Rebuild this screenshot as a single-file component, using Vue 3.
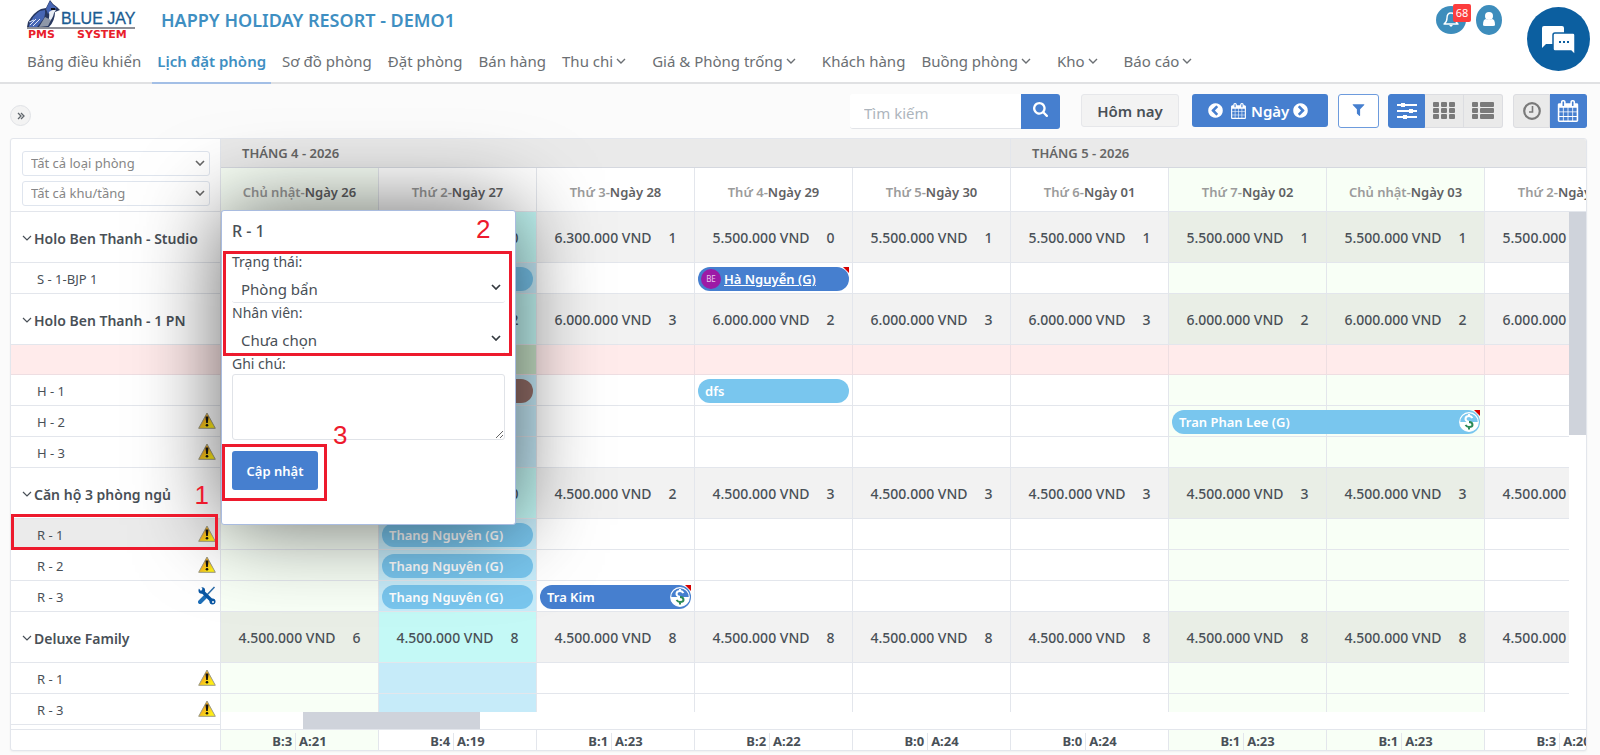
<script setup>
const nav = [
  { label: 'Bảng điều khiển' },
  { label: 'Lịch đặt phòng', active: true },
  { label: 'Sơ đồ phòng' },
  { label: 'Đặt phòng' },
  { label: 'Bán hàng' },
  { label: 'Thu chi', menu: true },
  { label: 'Giá & Phòng trống', menu: true },
  { label: 'Khách hàng' },
  { label: 'Buồng phòng', menu: true },
  { label: 'Kho', menu: true },
  { label: 'Báo cáo', menu: true }
]

const days = [
  { name: 'Chủ nhật', day: 'Ngày 26', b: 3, a: 21, kind: 'weekend' },
  { name: 'Thứ 2', day: 'Ngày 27', b: 4, a: 19, kind: 'today' },
  { name: 'Thứ 3', day: 'Ngày 28', b: 1, a: 23 },
  { name: 'Thứ 4', day: 'Ngày 29', b: 2, a: 22 },
  { name: 'Thứ 5', day: 'Ngày 30', b: 0, a: 24 },
  { name: 'Thứ 6', day: 'Ngày 01', b: 0, a: 24 },
  { name: 'Thứ 7', day: 'Ngày 02', b: 1, a: 23, kind: 'weekend' },
  { name: 'Chủ nhật', day: 'Ngày 03', b: 1, a: 23, kind: 'weekend' },
  { name: 'Thứ 2', day: 'Ngày 04', b: 3, a: 20 }
]

const fill = (price, counts) => counts.map((n) => ({ price, n }))

const rows = [
  {
    type: 'group',
    label: 'Holo Ben Thanh - Studio',
    cells: [...fill('6.300.000', [1, 0, 1]), ...fill('5.500.000', [0, 1, 1, 1, 1, 1])]
  },
  {
    type: 'room',
    label: 'S - 1-BJP 1',
    bookings: { 1: { text: '', tone: 'sky' }, 3: { text: 'Hà Nguyễn (G)', tone: 'blue', badge: 'BE', flag: true } }
  },
  { type: 'group', label: 'Holo Ben Thanh - 1 PN', cells: fill('6.000.000', [3, 2, 3, 2, 3, 3, 2, 2, 3]) },
  { type: 'blocked', label: '' },
  { type: 'room', label: 'H - 1', bookings: { 1: { text: '', tone: 'brown' }, 3: { text: 'dfs', tone: 'sky' } } },
  { type: 'room', label: 'H - 2', icon: 'warn', bookings: { 6: { text: 'Tran Phan Lee (G)', tone: 'sky', span: 2, flag: true, money: true } } },
  { type: 'room', label: 'H - 3', icon: 'warn' },
  { type: 'group', label: 'Căn hộ 3 phòng ngủ', cells: fill('4.500.000', [3, 0, 2, 3, 3, 3, 3, 3, 3]) },
  { type: 'room', label: 'R - 1', icon: 'warn', selected: true, bookings: { 1: { text: 'Thang Nguyên (G)', tone: 'sky' } } },
  { type: 'room', label: 'R - 2', icon: 'warn', bookings: { 1: { text: 'Thang Nguyên (G)', tone: 'sky' } } },
  {
    type: 'room',
    label: 'R - 3',
    icon: 'tools',
    bookings: { 1: { text: 'Thang Nguyên (G)', tone: 'sky' }, 2: { text: 'Tra Kim', tone: 'blue', flag: true, money: true } }
  },
  { type: 'group', label: 'Deluxe Family', cells: fill('4.500.000', [6, 8, 8, 8, 8, 8, 8, 8, 8]) },
  { type: 'room', label: 'R - 1', icon: 'warn' },
  { type: 'room', label: 'R - 3', icon: 'warn' }
]

const barWidth = (b) => ({ width: `calc(${(b.span || 1) * 100}% - 6px)` })

const calendarPath =
  'M192 1664h288v-288h-288v288zm352 0h320v-288h-320v288zm-352-352h288v-320h-288v320zm352 0h320v-320h-320v320zm-352-384h288v-288h-288v288zm736 736h320v-288h-320v288zm-384-736h320v-288h-320v288zm768 736h288v-288h-288v288zm-384-352h320v-320h-320v320zm-352-864v-288q0-13-9.5-22.5t-22.5-9.5h-64q-13 0-22.5 9.5t-9.5 22.5v288q0 13 9.5 22.5t22.5 9.5h64q13 0 22.5-9.5t9.5-22.5zm736 864h288v-320h-288v320zm-384-384h320v-288h-320v288zm384 0h288v-288h-288v288zm32-480v-288q0-13-9.5-22.5t-22.5-9.5h-64q-13 0-22.5 9.5t-9.5 22.5v288q0 13 9.5 22.5t22.5 9.5h64q13 0 22.5-9.5t9.5-22.5zm384-64v1280q0 52-38 90t-90 38h-1408q-52 0-90-38t-38-90v-1280q0-52 38-90t90-38h128v-96q0-66 47-113t113-47h64q66 0 113 47t47 113v96h384v-96q0-66 47-113t113-47h64q66 0 113 47t47 113v96h128q52 0 90 38t38 90z'
const circlePath =
  'M1037 1395l102-102q19-19 19-45t-19-45l-307-307 307-307q19-19 19-45t-19-45l-102-102q-19-19-45-19t-45 19l-454 454q-19 19-19 45t19 45l454 454q19 19 45 19t45-19zm627-499q0 209-103 385.5t-279.5 279.5-385.5 103-385.5-103-279.5-279.5-103-385.5 103-385.5 279.5-279.5 385.5-103 385.5 103 279.5 279.5 103 385.5z'
</script>

<template>
  <div class="page">
    <header class="header">
      <div class="brand-row">
        <a class="logo" href="#" aria-label="Blue Jay PMS System">
          <svg width="112" height="39" viewBox="0 0 112 39">
            <path d="M0 27 L1 22 Q7 12 14 9 L19 8 L23 0 Q26 5 30 7 L33 10 L28 12 Q28 21 22 27 Z" fill="#27375f" />
            <path d="M2 25 Q6 15 13 11 L18 10 Q19 17 14 22 L10 27 H2 Z" fill="#4766b4" />
            <path d="M19 9 L23 1 Q26 6 30 8 L25 10 L21 14 Z" fill="#4766b4" />
            <path d="M22 12 Q26 9 29 10 L27 13 Q26 19 20 24 Q23 18 22 12Z" fill="#e8edf5" />
            <path d="M18 17 L24 20 L21 26 L12 27 Z" fill="#8e97a8" />
            <path d="M3 25l6-6M6 26l7-7M2 22l5-2" stroke="#dfe7f7" />
            <path d="M24 9l4 0" stroke="#10131d" stroke-width="2" />
            <rect x="0" y="27" width="108" height="2" fill="#8d8f96" />
            <text class="logo-name" x="34" y="24">BLUE JAY</text>
            <text class="logo-sub" x="1" y="38">PMS</text>
            <text class="logo-sub" x="50" y="38">SYSTEM</text>
          </svg>
        </a>
        <h1 class="title">HAPPY HOLIDAY RESORT - DEMO1</h1>
        <div class="account">
          <button class="bell" aria-label="Thông báo">
            <svg width="30" height="28" viewBox="0 0 30 28">
              <ellipse cx="15" cy="14" rx="15" ry="14" fill="#3d8dbc" />
              <path d="M8 18q3-2 3-6 0-5 4-5 4 0 4 5 0 4 3 6z" fill="none" stroke="#fff" stroke-width="1.4" stroke-linejoin="round" />
              <path d="M13 19h4l-2 2z" fill="#fff" />
            </svg>
            <span class="count">68</span>
          </button>
          <button class="user" aria-label="Tài khoản">
            <svg width="26" height="30" viewBox="0 0 26 30">
              <ellipse cx="13" cy="15" rx="13" ry="15" fill="#3d8dbc" />
              <circle cx="13" cy="11" r="4" fill="#fff" />
              <path d="M7 20q0-6 3-6 3 2 6 0 3 0 3 6 0 1-2 1H9q-2 0-2-1z" fill="#fff" />
            </svg>
          </button>
        </div>
        <button class="chat" aria-label="Trò chuyện">
          <svg width="63" height="64" viewBox="0 0 63 64">
            <ellipse cx="31.5" cy="32" rx="31.5" ry="32" fill="#0c5fa0" />
            <path d="M17 19h18q2 0 2 2v14q0 2-2 2H19l-4 4V21q0-2 2-2z" fill="#fff" />
            <path d="M28 26h18q2 0 2 2v20l-4-4H28q-2 0-2-2V28q0-2 2-2z" fill="#fff" stroke="#0c5fa0" stroke-width="1.5" />
            <path d="M32 35h2M36 35h2M40 35h2" stroke="#0c5fa0" stroke-width="2" />
          </svg>
        </button>
      </div>
      <nav class="nav">
        <a v-for="item in nav" :key="item.label" href="#" :class="{ active: item.active, menu: item.menu }">
          {{ item.label }}
          <svg v-if="item.menu" width="10" height="6" viewBox="0 0 10 6"><path d="M1 1l4 4 4-4" fill="none" stroke="currentColor" stroke-width="1.4" /></svg>
        </a>
      </nav>
    </header>

    <div class="toolbar">
      <button class="expand" aria-label="Mở rộng">
        <svg width="8" height="8" viewBox="0 0 8 8"><path d="M1 1l3 3-3 3M4 1l3 3-3 3" fill="none" stroke="#5f656b" stroke-width="1.3" /></svg>
      </button>
      <form class="search" @submit.prevent>
        <input type="text" placeholder="Tìm kiếm" aria-label="Tìm kiếm" />
        <button aria-label="Tìm">
          <svg width="15" height="15" viewBox="64 128 1664 1664"><path fill="#fff" d="M1216 832q0-185-131.5-316.5t-316.5-131.5-316.5 131.5-131.5 316.5 131.5 316.5 316.5 131.5 316.5-131.5 131.5-316.5zm512 832q0 52-38 90t-90 38q-54 0-90-38l-343-342q-179 124-399 124-143 0-273.5-55.5t-225-150-150-225-55.5-273.5 55.5-273.5 150-225 225-150 273.5-55.5 273.5 55.5 225 150 150 225 55.5 273.5q0 220-124 399l343 343q37 37 37 90z" /></svg>
        </button>
      </form>
      <button class="today-btn">Hôm nay</button>
      <button class="range">
        <svg width="17" height="17" viewBox="0 0 1792 1792"><path :d="circlePath" fill="#fff" /></svg>
        <span class="range-label">
          <svg width="15" height="16" viewBox="64 0 1664 1792"><path :d="calendarPath" fill="#fff" /></svg>
          Ngày
        </span>
        <svg class="flip" width="17" height="17" viewBox="0 0 1792 1792"><path :d="circlePath" fill="#fff" /></svg>
      </button>
      <button class="filter" aria-label="Lọc">
        <svg width="15" height="15" viewBox="0 0 1792 1792"><path fill="#467fcf" d="M1595 295q17 41-14 70l-493 493v742q0 42-39 59-13 5-25 5-27 0-45-19l-256-256q-19-19-19-45v-486l-493-493q-31-29-14-70 17-39 59-39h1280q42 0 59 39z" /></svg>
      </button>
      <div class="btn-group">
        <button class="on" aria-label="Dòng thời gian">
          <svg width="20" height="18" viewBox="0 0 20 18"><path d="M0 3h20M0 9h20M0 15h20" stroke="#fff" stroke-width="1.8" /><path d="M4 1h4v4H4zM12 7h4v4h-4zM6 13h4v4H6z" fill="#fff" /></svg>
        </button>
        <button aria-label="Lưới">
          <svg width="22" height="18" viewBox="0 0 22 18" fill="#7a7a7a"><g v-for="x in [0, 8, 16]" :key="x"><rect v-for="y in [0, 6, 12]" :key="y" :x="x" :y="y" width="6" height="5" rx="1" /></g></svg>
        </button>
        <button aria-label="Danh sách">
          <svg width="22" height="18" viewBox="0 0 22 18" fill="#7a7a7a"><g v-for="y in [0, 6, 12]" :key="y"><rect x="0" :y="y" width="6" height="5" rx="1" /><rect x="8" :y="y" width="14" height="5" rx="1" /></g></svg>
        </button>
      </div>
      <div class="btn-group views">
        <button aria-label="Giờ">
          <svg width="20" height="20" viewBox="0 0 20 20" fill="none" stroke="#7a7a7a"><circle cx="10" cy="10" r="7.8" stroke-width="2.2" /><path d="M10.5 5v6H7" stroke-width="1.6" /></svg>
        </button>
        <button class="on" aria-label="Ngày">
          <svg width="22" height="22" viewBox="0 0 1792 1792"><path :d="calendarPath" fill="#fff" /></svg>
        </button>
      </div>
    </div>

    <main class="board">
      <div class="clip">
        <table>
          <colgroup>
            <col class="c-room" />
            <col v-for="(d, i) in days" :key="i" class="c-day" />
          </colgroup>
          <thead>
            <tr class="months">
              <td class="filters" rowspan="2">
                <div class="filter-list">
                  <select aria-label="Loại phòng"><option>Tất cả loại phòng</option></select>
                  <select aria-label="Khu/tầng"><option>Tất cả khu/tầng</option></select>
                </div>
              </td>
              <th colspan="5">THÁNG 4 - 2026</th>
              <th colspan="4">THÁNG 5 - 2026</th>
            </tr>
            <tr class="days">
              <th v-for="(d, i) in days" :key="i" :class="{ weekend: d.kind === 'weekend' }"><span>{{ d.name }}-</span>{{ d.day }}</th>
            </tr>
          </thead>
          <tbody>
            <tr v-for="(r, ri) in rows" :key="ri" :class="[r.type, { selected: r.selected }]">
              <th>
                <div class="room-name">
                  <svg v-if="r.type === 'group'" width="10" height="6" viewBox="0 0 10 6"><path d="M1 1l4 4 4-4" fill="none" stroke="currentColor" stroke-width="1.2" /></svg>
                  <span>{{ r.label }}</span>
                  <svg v-if="r.icon === 'warn'" class="state" width="18" height="17" viewBox="0 0 18 17">
                    <defs>
                      <linearGradient :id="'w' + ri" x1="0" y1="0" x2="1" y2="1"><stop offset="0" stop-color="#c8702a" /><stop offset="0.45" stop-color="#f6b81c" /><stop offset="0.8" stop-color="#ffee14" /></linearGradient>
                    </defs>
                    <path d="M9 1L17.3 16.3H.7z" :fill="`url(#w${ri})`" stroke="#9c9a83" stroke-linejoin="round" />
                    <path d="M7.5 4.5h3l-.7 6.500H8.200z" fill="#111" /><circle cx="9" cy="13.3" r="1.3" fill="#111" />
                  </svg>
                  <svg v-if="r.icon === 'tools'" class="state" width="18" height="19" viewBox="0 0 18 19">
                    <path d="M16.5 1L8 10" stroke="#2d6ca8" stroke-width="1.5" />
                    <path d="M8 10l-6 6" stroke="#1f6fb8" stroke-width="4" stroke-linecap="round" />
                    <path d="M4 5l10 10" stroke="#0a57a4" stroke-width="3.5" />
                    <circle cx="3.8" cy="4.5" r="3.3" fill="#0a57a4" /><path d="M0 1.5l3-1 1.5 2.5-1.5 2z" fill="#fff" />
                    <circle cx="14.5" cy="15.5" r="3" fill="#0a57a4" /><circle cx="15" cy="16" r="1" fill="#fff" />
                  </svg>
                </div>
                <template v-if="r.selected">
                  <i class="mark mark-row"></i>
                  <b class="num num-one">1</b>
                </template>
              </th>
              <td v-for="(d, i) in days" :key="i" :class="d.kind">
                <div v-if="r.cells" class="rate"><span>{{ r.cells[i].price }} VND</span><span>{{ r.cells[i].n }}</span></div>
                <a v-if="r.bookings && r.bookings[i]" href="#" class="bar" :class="[r.bookings[i].tone, { flagged: r.bookings[i].flag }]" :style="barWidth(r.bookings[i])">
                  <span v-if="r.bookings[i].badge" class="badge">{{ r.bookings[i].badge }}</span>
                  <span :class="{ underlined: r.bookings[i].badge }">{{ r.bookings[i].text }}</span>
                  <svg v-if="r.bookings[i].money" class="money" width="20" height="20" viewBox="0 0 20 20">
                    <circle cx="10" cy="10" r="9.3" fill="none" stroke="#fff" stroke-width="1.2" />
                    <path d="M0.7 10a9.3 9.3 0 0 0 18.6 0z" fill="#fff" />
                    <path d="M13.5 6Q12 4 10 4 6.5 4 6.5 7q0 2 3.5 3M10 2v2" fill="none" stroke="#fff" stroke-width="2" />
                    <path d="M10 10q3.5 0 3.5 3 0 2-3.5 2-2 0-3.5-2M10 15v2.5" fill="none" stroke="#2c8a57" stroke-width="2" />
                  </svg>
                </a>
              </td>
            </tr>
            <tr class="filler"><th></th><td v-for="(d, i) in days" :key="i"></td></tr>
          </tbody>
          <tfoot>
            <tr>
              <th></th>
              <td v-for="(d, i) in days" :key="i" :class="{ weekend: d.kind === 'weekend' }">
                <div class="totals"><span>B:{{ d.b }}</span><span>A:{{ d.a }}</span></div>
              </td>
            </tr>
          </tfoot>
        </table>
        <div class="scroll-y"><i></i></div>
        <div class="scroll-x"><i></i></div>
      </div>

      <form class="popup" @submit.prevent>
        <h2>R - 1</h2>
        <label for="status">Trạng thái:</label>
        <select id="status"><option>Phòng bẩn</option></select>
        <label for="staff">Nhân viên:</label>
        <select id="staff"><option>Chưa chọn</option></select>
        <label for="note">Ghi chú:</label>
        <textarea id="note"></textarea>
        <button>Cập nhật</button>
        <i class="mark mark-fields"></i>
        <i class="mark mark-save"></i>
        <b class="num num-two">2</b>
        <b class="num num-three">3</b>
      </form>
    </main>
  </div>
</template>

<style>
body {
  margin: 0;
  background: #fbfbfb;
}
</style>

<style scoped>
.page,
.page * {
  box-sizing: border-box;
}
.page {
  font-family: 'Noto Sans', 'Open Sans', sans-serif;
  font-size: 14px;
  color: #495057;
  overflow: hidden;
  min-height: 100vh;
}
button,
input,
select,
textarea {
  font: inherit;
  color: inherit;
  margin: 0;
}
button {
  cursor: pointer;
  padding: 0;
}
a {
  color: inherit;
  text-decoration: none;
}
.header {
  background: #fff;
  border-bottom: 2px solid #e0e1e3;
  padding-left: 27px;
}
.brand-row {
  display: flex;
  height: 39px;
  align-items: flex-start;
}
.logo {
  width: 134px;
}
.logo svg {
  display: block;
}
.logo-name {
  font: 16px 'Liberation Sans', Arial, sans-serif;
  fill: #1b5c92;
  stroke: #1b5c92;
  stroke-width: 0.3px;
}
.logo-sub {
  font: bold 11px 'DejaVu Sans', sans-serif;
  fill: #e8202a;
}
.title {
  flex: 1;
  margin: 0;
  font-size: 18px;
  line-height: 40px;
  font-weight: 600;
  color: #3f8fc2;
}
.account {
  display: flex;
  gap: 10px;
  padding-top: 5px;
}
.account button,
.chat {
  position: relative;
  border: 0;
  background: none;
}
.account svg,
.chat svg {
  display: block;
}
.account button {
  height: 30px;
}
.bell .count {
  position: absolute;
  left: 17px;
  top: -1px;
  width: 18px;
  height: 18px;
  border-radius: 2px;
  background: #fc3d3d;
  color: #fff;
  font-size: 11px;
  line-height: 18px;
}
.chat {
  margin: 7px 10px 0 25px;
  height: 64px;
  z-index: 2;
}
.nav {
  display: flex;
  height: 43px;
  gap: 6px;
}
.nav a {
  position: relative;
  display: flex;
  align-items: center;
  gap: 3px;
  padding: 0 5px;
  font-size: 15px;
  white-space: nowrap;
  color: #6b6f73;
}
.nav a:first-child {
  padding-left: 0;
}
.nav a.menu {
  padding-right: 15px;
}
.nav a.active {
  color: #3f8fc2;
  font-weight: 600;
}
.nav a.active::after {
  content: '';
  position: absolute;
  left: 0;
  right: 0;
  bottom: -2px;
  height: 2px;
  background: #a3bfe6;
}
.toolbar {
  display: flex;
  height: 54px;
  padding: 10px 13px 0 10px;
}
.expand {
  width: 21px;
  height: 21px;
  margin: 11px auto 0 0;
  border: 1px solid #e0e2e6;
  border-radius: 50%;
  background: #f3f3f3;
  display: grid;
  place-items: center;
}
.search {
  display: flex;
  height: 35px;
  margin-right: 21px;
}
.search input {
  width: 171px;
  border: 0;
  border-bottom: 1px solid #e2e4e8;
  border-radius: 3px 0 0 3px;
  background: #fff;
  padding: 4px 14px 0;
  font-size: 15px;
}
.search input::placeholder {
  color: #adb5bd;
}
.search button {
  width: 39px;
  border: 0;
  border-radius: 0 3px 3px 0;
  background: #467fcf;
}
.today-btn {
  width: 98px;
  height: 33px;
  margin-right: 13px;
  border: 1px solid #e6e7ea;
  border-radius: 3px;
  background: #f3f3f3;
  font-size: 15px;
  font-weight: 600;
}
.range {
  width: 136px;
  height: 33px;
  margin-right: 10px;
  border: 0;
  border-radius: 3px;
  background: #467fcf;
  color: #fff;
  font-size: 15px;
  font-weight: 600;
  display: flex;
  align-items: center;
  justify-content: flex-start;
  padding-left: 15px;
  gap: 3px;
}
.range-label {
  display: flex;
  align-items: center;
  gap: 5px;
  padding-left: 4px;
}
.flip {
  transform: scaleX(-1);
}
.filter {
  width: 41px;
  height: 34px;
  margin-right: 9px;
  border: 1px solid #6d9bdd;
  border-radius: 3px;
  background: #fff;
}
.btn-group {
  display: flex;
  height: 34px;
}
.btn-group button {
  width: 39px;
  display: grid;
  place-items: center;
  border: 1px solid #dcdde1;
  border-left-width: 0;
  background: #eaeaea;
}
.btn-group button:first-child {
  width: 37px;
  border-left-width: 1px;
  border-radius: 3px 0 0 3px;
}
.btn-group button:last-child {
  border-radius: 0 3px 3px 0;
}
.btn-group button.on {
  width: 37px;
  background: #467fcf;
  border-color: #467fcf;
}
.views {
  margin-left: 10px;
}

.board {
  position: relative;
  margin: 0 13px 4px 10px;
}
.clip {
  position: relative;
  overflow: hidden;
  border: 1px solid #e3e6ec;
  border-radius: 3px;
  background: #fff;
  box-shadow: 0 1px 2px rgba(0, 0, 0, 0.05);
}
table {
  width: 1632px;
  table-layout: fixed;
  border-collapse: separate;
  border-spacing: 0;
}
.c-room {
  width: 210px;
}
.c-day {
  width: 158px;
}
th,
td {
  padding: 0;
  border-right: 1px solid #e3e6ec;
  border-bottom: 1px solid #e3e6ec;
  white-space: nowrap;
  text-align: left;
}
td {
  position: relative;
}
.months th {
  height: 29px;
  padding-left: 21px;
  background: #eaeaea;
  border-bottom-color: #d5d8df;
  font-size: 13px;
  font-weight: 600;
  color: #666;
}
.days th {
  height: 44px;
  text-align: center;
  font-size: 13px;
  font-weight: 600;
  color: #5f6163;
  padding-top: 4px;
}
.days th span {
  color: #9b9b9b;
}
.filter-list {
  display: flex;
  flex-direction: column;
  gap: 5px;
  padding: 6px 10px 0 11px;
}
select {
  appearance: none;
  background: #fff url("data:image/svg+xml,%3Csvg xmlns='http://www.w3.org/2000/svg' viewBox='0 0 10 6'%3E%3Cpath d='M1 1l4 4 4-4' fill='none' stroke='%23666' stroke-width='1.6'/%3E%3C/svg%3E") no-repeat right 4px center / 10px 6px;
}
.filter-list select {
  height: 25px;
  border: 1px solid #dfe5ee;
  border-radius: 3px;
  padding: 0 8px;
  font-size: 13px;
  color: #868686;
}
tbody th {
  position: relative;
  font-weight: 400;
}
tbody .room th,
tbody .room td {
  height: 31px;
}
tbody .blocked th,
tbody .blocked td {
  height: 30px;
  background: #ffebeb;
  border-color: #eedee2;
}
tbody .group th,
tbody .group td {
  height: 51px;
}
.room-name {
  display: flex;
  align-items: center;
  padding: 2px 4px 0 26px;
  font-size: 13px;
}
.room-name .state {
  margin: 0 0 3px auto;
}
.group .room-name {
  padding-left: 11px;
  gap: 2px;
  font-size: 14px;
  font-weight: 600;
}
.selected th {
  background: #ebebeb;
}
.group td {
  background: #f2f2f2;
}
.weekend {
  background: #f8fff6;
}
.group .weekend {
  background: #e9eee6;
}
.room .today {
  background: #c6ebf9;
}
.group .today {
  background: #c4f9f6;
}
.blocked td.today {
  background: #c8e3c8;
}
.rate {
  display: flex;
  justify-content: center;
  gap: 17px;
  font-size: 14px;
  font-weight: 500;
}
.bar {
  position: absolute;
  z-index: 1;
  left: 3px;
  top: 4px;
  height: 24px;
  padding-left: 7px;
  border-radius: 12px;
  display: flex;
  align-items: center;
  color: #fff;
  font-size: 13px;
  font-weight: 600;
}
.bar.sky {
  background: #79c6ee;
}
.bar.blue {
  background: #467fcf;
}
.bar.brown {
  background: #96706a;
}
.flagged::after {
  content: '';
  position: absolute;
  top: 0;
  right: 0;
  border-top: 6px solid #d50000;
  border-left: 6px solid transparent;
}
.badge {
  width: 20px;
  height: 20px;
  margin: 0 3px 0 -4px;
  border-radius: 50%;
  background: #9c1ba6;
  color: #e9c5ee;
  font-size: 8px;
  font-weight: 400;
  line-height: 20px;
  text-align: center;
}
.underlined {
  text-decoration: underline;
}
.money {
  margin: 0 1px 0 auto;
}
.filler th,
.filler td {
  height: 5px;
}
tfoot th,
tfoot td {
  height: 20px;
  border-bottom: 0;
}
.totals {
  display: flex;
  justify-content: center;
  padding-top: 3px;
  font-size: 13px;
  line-height: 17px;
  font-weight: 700;
}
.totals span:first-child {
  padding-right: 3px;
  border-right: 1px solid #e3e6ec;
}
.totals span:last-child {
  padding-left: 3px;
}
.scroll-y,
.scroll-x {
  position: absolute;
  z-index: 2;
  background: #fff;
}
.scroll-y {
  top: 73px;
  right: 0;
  bottom: 21px;
  width: 17px;
}
.scroll-x {
  left: 210px;
  right: 0;
  bottom: 21px;
  height: 17px;
}
.scroll-y i,
.scroll-x i {
  display: block;
  background: #cfd3db;
}
.scroll-y i {
  height: 223px;
}
.scroll-x i {
  width: 177px;
  height: 17px;
  margin-left: 82px;
}

.popup {
  position: absolute;
  z-index: 5;
  left: 211px;
  top: 72px;
  width: 295px;
  height: 315px;
  padding: 9px 10px 0;
  display: flex;
  flex-direction: column;
  background: #fff;
  border: 1px solid #a9bce0;
  border-radius: 3px;
  box-shadow: 0 0 85px rgba(0, 0, 0, 0.6);
}
.popup h2 {
  margin: 0 0 10px;
  font-size: 16px;
  line-height: 22px;
  font-weight: 500;
}
.popup label {
  font-size: 14px;
  line-height: 20px;
}
.popup select {
  height: 31px;
  border: 0;
  border-bottom: 1px solid #e3e6ec;
  border-radius: 3px;
  padding: 4px 9px 0;
  font-size: 15px;
  background-image: url("data:image/svg+xml,%3Csvg xmlns='http://www.w3.org/2000/svg' viewBox='0 0 10 6'%3E%3Cpath d='M1 1l4 4 4-4' fill='none' stroke='%23343a40' stroke-width='1.7'/%3E%3C/svg%3E");
}
.popup textarea {
  height: 66px;
  border: 1px solid #e0e3e8;
  border-radius: 3px;
}
.popup button {
  width: 86px;
  height: 39px;
  margin-top: 11px;
  border: 0;
  border-radius: 3px;
  background: #467fcf;
  color: #fff;
  font-size: 13px;
  font-weight: 600;
}
.mark {
  position: absolute;
  z-index: 6;
  border: 3px solid #ed1a2d;
  pointer-events: none;
}
.mark-row {
  inset: -5px 2px -1px 0;
}
.mark-fields {
  left: 1px;
  top: 40px;
  width: 289px;
  height: 105px;
}
.mark-save {
  left: 0;
  top: 233px;
  width: 105px;
  height: 57px;
}
.num {
  position: absolute;
  z-index: 6;
  font: 26px/26px 'Liberation Sans', Arial, sans-serif;
  color: #ed1a2d;
}
.num-one {
  right: 11px;
  bottom: 41px;
}
.num-two {
  left: 254px;
  top: 5px;
}
.num-three {
  left: 111px;
  top: 211px;
}
</style>
